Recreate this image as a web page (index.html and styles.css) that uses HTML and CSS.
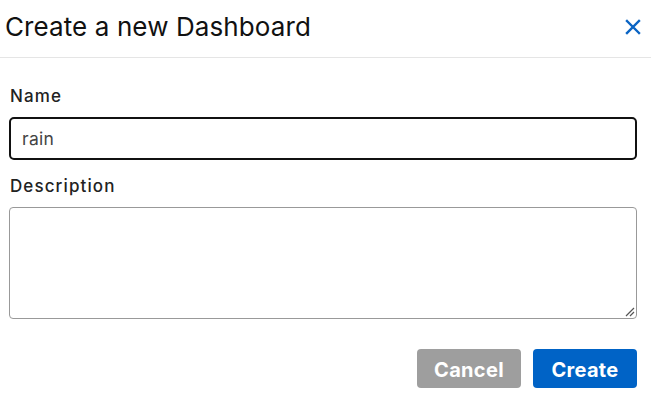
FILE: index.html
```html
<!DOCTYPE html>
<html>
<head>
<meta charset="utf-8">
<link rel="stylesheet" href="styles.css">
</head>
<body>
<div class="dialog">
  <div class="header">
    <h1 class="title">Create a new Dashboard</h1>
    <button class="close" aria-label="Close">
      <svg width="16" height="16" viewBox="0 0 16 16"><path d="M2 2L14 14M14 2L2 14" stroke="#0a64c4" stroke-width="2.4" stroke-linecap="square"/></svg>
    </button>
  </div>
  <div class="content">
    <label class="label">Name</label>
    <div class="input">rain</div>
    <label class="label desc">Description</label>
    <div class="textarea">
      <svg class="grip" width="12" height="12" viewBox="0 0 12 12"><path d="M3 11L11 3M7 11L11 7" stroke="#555" stroke-width="1.2"/></svg>
    </div>
    <div class="actions">
      <button class="btn cancel">Cancel</button>
      <button class="btn create">Create</button>
    </div>
  </div>
</div>
</body>
</html>
```
FILE: styles.css
```css
html, body {
  margin: 0;
  padding: 0;
  background: #fff;
}
body {
  font-family: "Inter", "Liberation Sans", sans-serif;
  color: #1a1a1a;
}
.dialog {
  width: 651px;
}
.header {
  height: 58px;
  border-bottom: 1px solid #e5e5e5;
  display: flex;
  align-items: center;
  justify-content: space-between;
  padding: 0 10px 0 5px;
  box-sizing: border-box;
}
.title {
  margin: 0;
  font-size: 26px;
  font-weight: 400;
  letter-spacing: 0.1px;
  color: #111;
  position: relative;
  top: -2px;
}
.close {
  border: 0;
  background: none;
  padding: 0;
  width: 16px;
  height: 16px;
  display: flex;
  position: relative;
  top: -2px;
}
.content {
  padding: 27px 14px 0 9px;
  display: flex;
  flex-direction: column;
}
.label {
  font-size: 17px;
  font-weight: 500;
  letter-spacing: 1.1px;
  color: #222;
  padding-left: 1px;
  line-height: 22px;
}
.input {
  margin-top: 10px;
  height: 43px;
  box-sizing: border-box;
  border: 2px solid #111;
  border-radius: 5px;
  padding: 0 11px;
  display: flex;
  align-items: center;
  font-size: 17.5px;
  letter-spacing: 0.3px;
  color: #444;
}
.desc {
  margin-top: 15px;
}
.textarea {
  margin-top: 10px;
  height: 112px;
  box-sizing: border-box;
  border: 1px solid #999;
  border-radius: 4px;
  position: relative;
}
.grip {
  position: absolute;
  right: 1px;
  bottom: 1px;
}
.actions {
  margin-top: 30px;
  display: flex;
  justify-content: flex-end;
  gap: 12px;
}
.btn {
  width: 104px;
  height: 39px;
  border: 0;
  border-radius: 4px;
  color: #fff;
  font-family: "Inter", "Liberation Sans", sans-serif;
  font-size: 20px;
  font-weight: 700;
  letter-spacing: 0.3px;
  padding: 2px 0 0;
}
.cancel {
  background: #9e9e9e;
}
.create {
  background: #0063c6;
}
```
